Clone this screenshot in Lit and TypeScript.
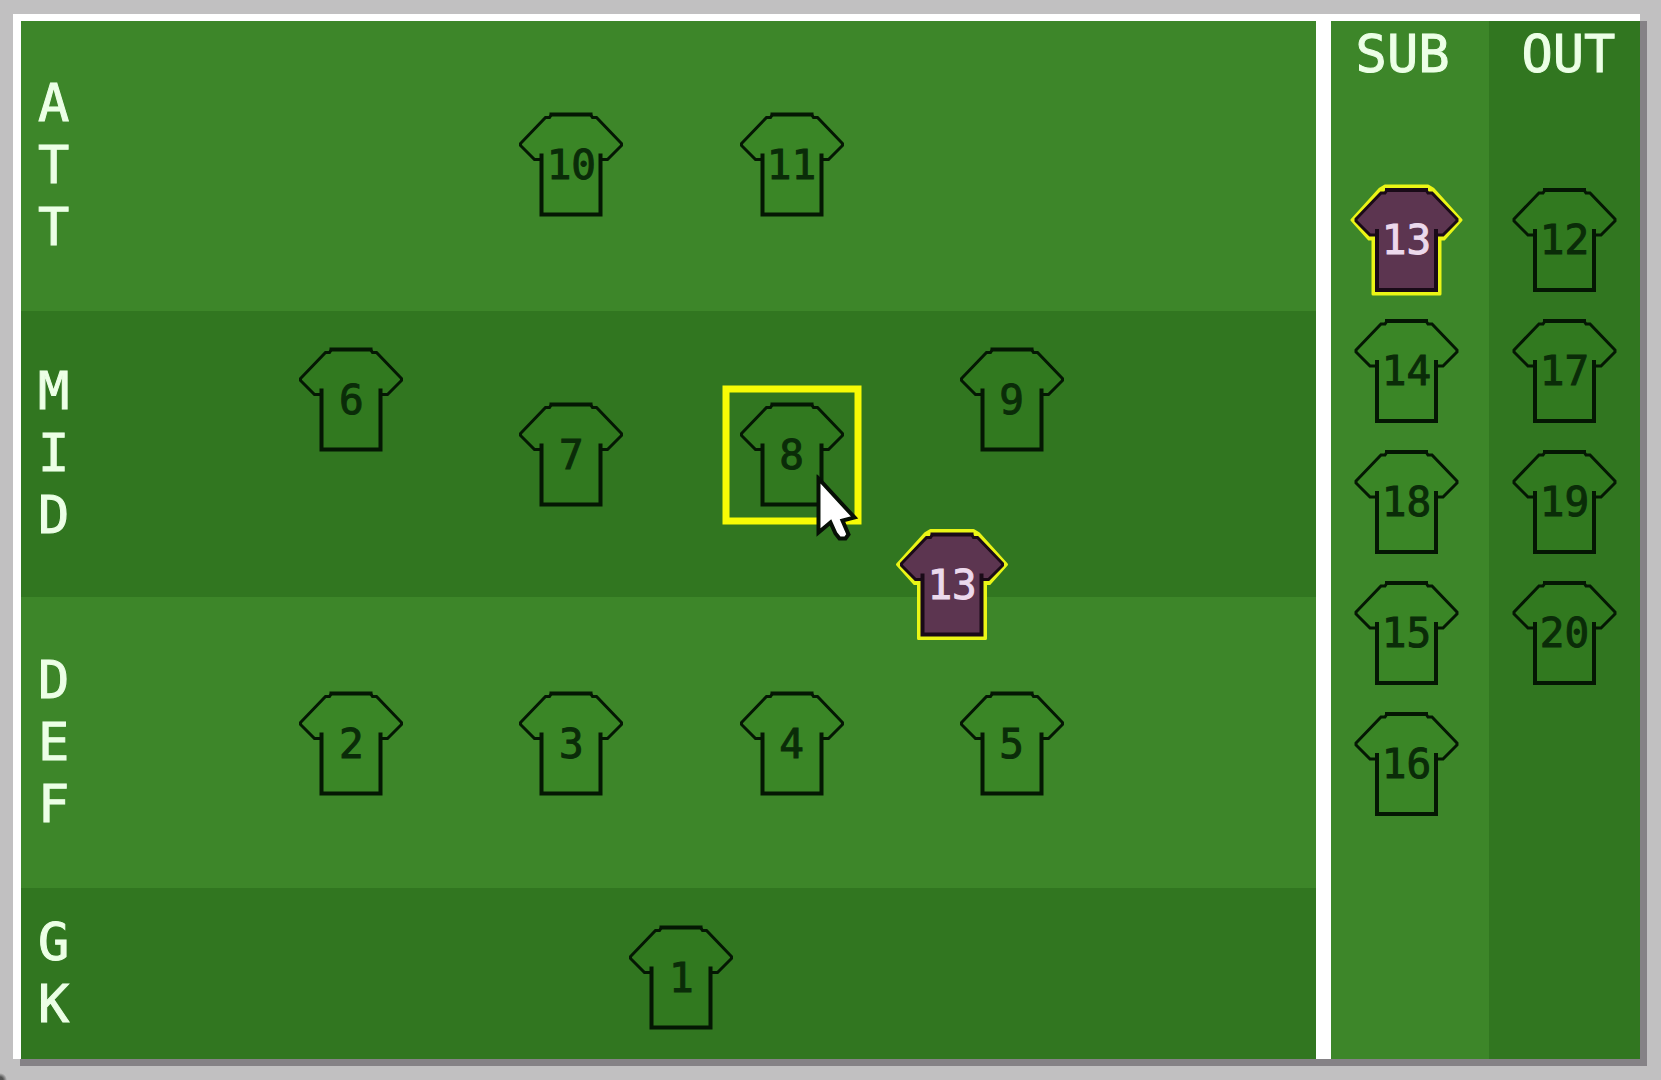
import { LitElement, html, css, svg } from "lit";
import { customElement, property } from "lit/decorators.js";
import { classMap } from "lit/directives/class-map.js";
import { styleMap } from "lit/directives/style-map.js";

const SHIRT =
  "M33 2H72L74 5H78L103 31V33L89 47H82V102H23V47H16L2 33V31L27 5H31Z";

const SHIRT_EDGES = "M33 2H72M23 43V102H82V43";

const SHIRT_HALO =
  "M31 -2H74L79 1L107 32L90 51H86V106H19V51H15L-2 32L26 1Z";

@customElement("squad-shirt")
export class SquadShirt extends LitElement {
  @property({ type: Number }) number = 0;
  @property({ type: Boolean }) filled = false;

  static styles = css`
    :host {
      display: block;
    }
    .shirt {
      display: grid;
      place-items: center;
      width: 105px;
      height: 105px;
      margin: 0;
      padding: 0;
      border: 0;
      background: none;
      color: #0a2c08;
      font: 41px/103px "DejaVu Sans Mono", monospace;
      -webkit-text-stroke: 1px currentColor;
      cursor: pointer;
    }
    .shirt > * {
      grid-area: 1 / 1;
    }
    .filled {
      color: #ecd9ec;
    }
    .art {
      display: block;
      width: 105px;
      height: 105px;
      overflow: visible;
      fill: #30891f;
      fill-opacity: 0.2;
    }
    .line {
      stroke: #041703;
      stroke-width: 3;
    }
    .edge {
      fill: none;
      stroke: #041703;
      stroke-width: 4;
      stroke-linecap: square;
    }
    .halo {
      fill: #eaf516;
      fill-opacity: 1;
      stroke: #eaf516;
      stroke-width: 3;
      stroke-linejoin: round;
    }
    .filled .line {
      stroke: #190a17;
      fill: #5c3550;
      fill-opacity: 1;
    }
    .filled .edge {
      stroke: #190a17;
    }
  `;

  render() {
    return html`
      <button
        type="button"
        class=${classMap({ shirt: true, filled: this.filled })}
      >
        <svg class="art" viewBox="0 0 105 105" aria-hidden="true">
          ${this.filled ? svg`<path class="halo" d=${SHIRT_HALO} />` : null}
          <path class="line" d=${SHIRT} />
          <path class="edge" d=${SHIRT_EDGES} />
        </svg>
        <span>${this.number}</span>
      </button>
    `;
  }
}

interface Spot {
  number: number;
  x: number;
  y: number;
  target?: boolean;
  dragged?: boolean;
}

/* Shirt centres as percentages of the pitch. */
const SPOTS: Spot[] = [
  { number: 10, x: 42.5, y: 13.9 },
  { number: 11, x: 59.5, y: 13.9 },
  { number: 6, x: 25.5, y: 36.5 },
  { number: 7, x: 42.5, y: 41.8 },
  { number: 8, x: 59.5, y: 41.8, target: true },
  { number: 9, x: 76.5, y: 36.5 },
  { number: 2, x: 25.5, y: 69.7 },
  { number: 3, x: 42.5, y: 69.7 },
  { number: 4, x: 59.5, y: 69.7 },
  { number: 5, x: 76.5, y: 69.7 },
  { number: 1, x: 51, y: 92.2 },
  { number: 13, x: 71.9, y: 54.3, dragged: true },
];

const BANDS = ["ATT", "MID", "DEF", "GK"];

const SUBS = [13, 14, 18, 15, 16];
const OUTS = [12, 17, 19, 20];

@customElement("app-root")
export class AppRoot extends LitElement {
  static styles = css`
    :host {
      display: block;
      font: 52px/62px "DejaVu Sans Mono", monospace;
      color: #ecffe6;
    }
    .window {
      box-sizing: border-box;
      display: grid;
      min-height: 100vh;
      padding: 14px 21px 21px 13px;
      background: radial-gradient(circle at 0 100%, #555 3px, #c1c0c1 7px);
    }
    .board {
      display: grid;
      grid-template-columns: 1fr auto;
      padding: 7px 0 0 8px;
      background: #fff;
      box-shadow: 7px 7px 0 #858286;
    }
    .pitch {
      position: relative;
      display: grid;
      grid-template-rows: 290fr 287fr 291fr 171fr;
    }
    .band {
      display: flex;
      align-items: center;
      padding-left: 17px;
      background: #3d8629;
    }
    .band:nth-child(even) {
      background: #317620;
    }
    .label,
    .head {
      margin: 0;
      font: inherit;
      -webkit-text-stroke: 1px currentColor;
    }
    .label {
      width: 1ch;
      padding-bottom: 2px;
      word-break: break-all;
    }
    .spot {
      position: absolute;
      transform: translate(-50%, -50%);
    }
    .target {
      padding: 10px;
      border: 7px solid #f7fb05;
    }
    .cursor {
      position: absolute;
      left: 86px;
      top: 82px;
      width: 46px;
      height: 70px;
      fill: #fff;
      stroke: #071006;
      stroke-width: 4;
      pointer-events: none;
    }
    .bench {
      width: 309px;
      border-left: 15px solid #fff;
      background: linear-gradient(to right, #3d8629 51%, #317620 51%);
    }
    .heads {
      display: flex;
      justify-content: center;
      gap: 72px;
      margin-bottom: 101px;
      line-height: 66px;
    }
    .lists {
      display: flex;
      justify-content: center;
      gap: 53px;
    }
    .list {
      display: flex;
      flex-direction: column;
      gap: 26px;
      margin: 0;
      padding: 0;
      list-style: none;
    }
  `;

  private renderSpot(s: Spot) {
    return html`
      <div
        class=${classMap({ spot: true, target: !!s.target })}
        style=${styleMap({ left: `${s.x}%`, top: `${s.y}%` })}
      >
        <squad-shirt .number=${s.number} .filled=${!!s.dragged}></squad-shirt>
        ${s.target
          ? html`<svg class="cursor" viewBox="0 0 46 70" aria-hidden="true">
              <path
                d="M3 4V58L15 48L20 59L24 64H30L33 60L27 46L39 43Z"
              />
            </svg>`
          : null}
      </div>
    `;
  }

  private renderList(numbers: number[]) {
    return html`<ul class="list">
      ${numbers.map(
        (n) => html`<li>
          <squad-shirt .number=${n} .filled=${n === 13}></squad-shirt>
        </li>`
      )}
    </ul>`;
  }

  render() {
    return html`
      <main class="window">
        <div class="board">
          <section class="pitch">
            ${BANDS.map(
              (b) => html`<div class="band"><h2 class="label">${b}</h2></div>`
            )}
            ${SPOTS.map((s) => this.renderSpot(s))}
          </section>
          <aside class="bench">
            <div class="heads">
              <h2 class="head">SUB</h2>
              <h2 class="head">OUT</h2>
            </div>
            <div class="lists">
              ${this.renderList(SUBS)} ${this.renderList(OUTS)}
            </div>
          </aside>
        </div>
      </main>
    `;
  }
}
